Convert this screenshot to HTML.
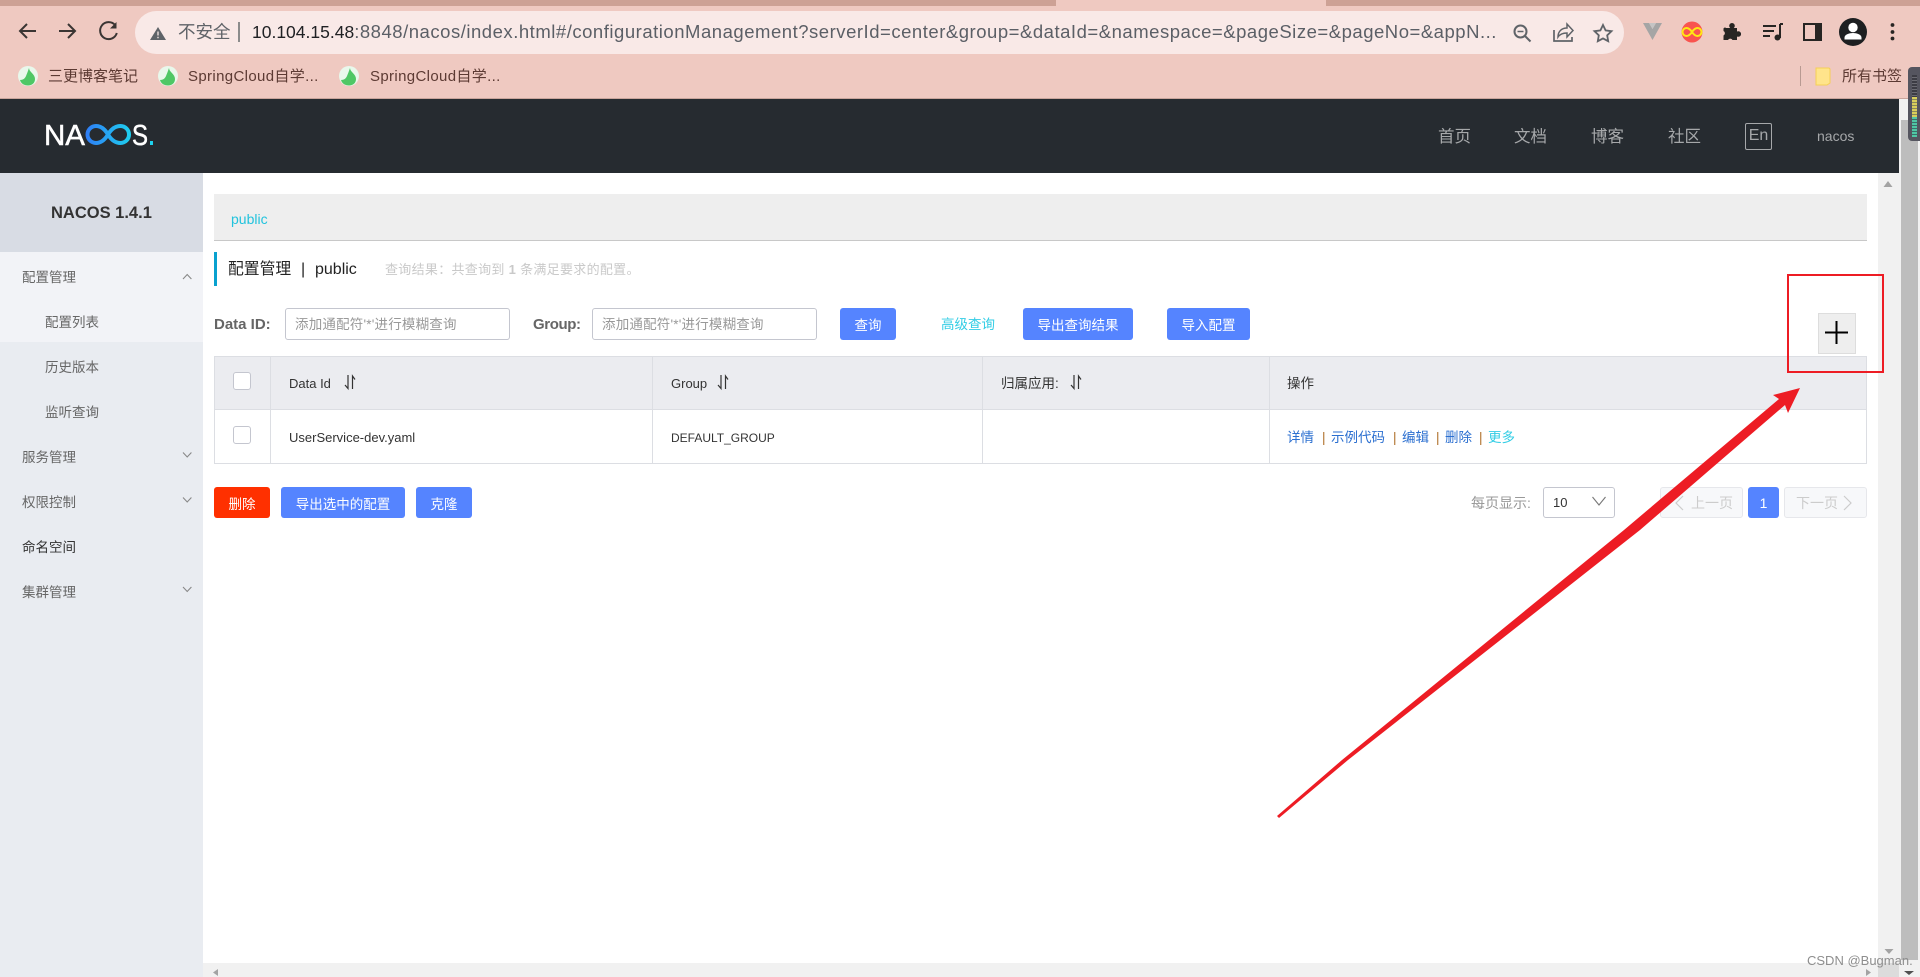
<!DOCTYPE html>
<html lang="zh-CN">
<head>
<meta charset="utf-8">
<title>Nacos</title>
<style>
html,body{margin:0;padding:0;width:1920px;height:977px;overflow:hidden;background:#fff}
body{position:relative;font-family:"Liberation Sans","Noto Sans CJK SC",sans-serif;font-size:13.5px;color:#333}
.b{position:absolute;box-sizing:border-box}
.t{position:absolute;white-space:nowrap;line-height:20px;height:20px}
.btn{position:absolute;box-sizing:border-box;background:#5584ff;color:#fff;border-radius:3px;display:flex;align-items:center;justify-content:center;font-size:13.5px;white-space:nowrap}
.inp{position:absolute;box-sizing:border-box;top:308px;height:32px;border:1px solid #c4c6cf;border-radius:3px;background:#fff;color:#999;line-height:32px;padding-left:9px;font-size:13.5px;letter-spacing:.2px;white-space:nowrap;overflow:hidden}
.m{color:#666}
.sb{color:#666;left:45px}
.lk{color:#2b6fd0;top:428px}
.sep{color:#b0702c;top:428px}
.bm{color:#5c3a33;font-size:15px;top:67px}
.nav{color:#a6a8aa;font-size:16.5px;top:127px}
svg{position:absolute;overflow:visible}
</style>
</head>
<body>
<!-- browser chrome -->
<div class="b" style="left:0;top:0;width:1920px;height:99px;background:#efc9c1;border-bottom:1px solid #c9a59c"></div>
<div class="b" style="left:0;top:0;width:1920px;height:6px;background:#cda195"></div>
<div class="b" style="left:1056px;top:0;width:270px;height:6px;background:#efc9c1"></div>
<div class="b" style="left:135px;top:11px;width:1489px;height:43px;background:#f9e9e7;border-radius:22px"></div>

<svg style="left:0;top:0" width="180" height="60" fill="none" stroke="#3a3533" stroke-width="2">
<path d="M36 31H20M27 24l-7 7 7 7"/>
<path d="M59 31h16M68 24l7 7-7 7"/>
<path d="M115 25a8.500 8.500 0 1 0 1.800 8"/><path d="M116.500 22v6.500H110" fill="#3a3533" stroke="none"/>
<path d="M158 27l8 13h-16z" fill="#5f6368" stroke="none"/>
<path d="M158 31.500v4M158 36.800v1.500" stroke="#f9e9e7" stroke-width="1.300"/>
</svg>
<div class="t" style="left:178px;top:22px;font-size:17.500px;color:#5f6368">不安全</div>
<div class="b" style="left:238px;top:22px;width:2px;height:20px;background:#8c8c8c"></div>
<div class="t" style="left:252px;top:22px;font-size:17.500px;color:#202124">10.104.15.48<span style="color:#5b5f66;font-size:18.500px;letter-spacing:.52px">:8848/nacos/index.html#/configurationManagement?serverId=center&amp;group=&amp;dataId=&amp;namespace=&amp;pageSize=&amp;pageNo=&amp;appN...</span></div>

<svg style="left:0;top:0" width="1920" height="99" fill="none">
<g stroke="#5f6368" stroke-width="2">
<circle cx="1520.500" cy="31.500" r="6"/><path d="M1525 36l5.500 5.500"/><path d="M1517.500 31.500h6" stroke-width="1.500"/>
<path d="M1554 30v11h18v-4" stroke-width="1.700"/><path d="M1558 37c0-6 4-9 9-9v-4l6 6.500-6 6.500v-4c-4 0-7 1-9 4z" stroke-width="1.500"/>
<path d="M1603 25l2.600 5.400 5.900.8-4.300 4.100 1 5.900-5.200-2.800-5.200 2.800 1-5.900-4.300-4.100 5.900-.8z" stroke-width="1.800"/>
</g>
<path d="M1643 23h6l3.500 6 3.500-6h6l-9.500 17z" fill="#a5a5a5"/><path d="M1649 23l3.500 6 3.500-6" fill="#c4c4c4"/>
<circle cx="1692" cy="32" r="10.500" fill="#f9544f"/>
<path d="M1692 32c-2-3-3.800-4-5.500-4-2.200 0-4 1.800-4 4s1.800 4 4 4c1.700 0 3.500-1 5.500-4 2-3 3.800-4 5.500-4 2.200 0 4 1.800 4 4s-1.800 4-4 4c-1.700 0-3.500-1-5.500-4z" stroke="#ffe812" stroke-width="2"/>
<path d="M1726 28h4.200a2.800 2.800 0 1 1 3.600 0H1737v3.500a2.800 2.800 0 1 1 0 5V40h-4.500a2.500 2.500 0 0 0-4.500 0h-4.500v-4.500a2.500 2.500 0 0 0 0-4.500v-1.500a1.500 1.500 0 0 1 2.500-1.500z" fill="#272523"/>
<path d="M1763 26h13M1763 31h11M1763 36h7" stroke="#272523" stroke-width="2"/>
<path d="M1780 24v14" stroke="#272523" stroke-width="2"/><circle cx="1777.500" cy="37.500" r="3" fill="#272523"/><path d="M1780 24h3" stroke="#272523" stroke-width="2"/>
<rect x="1804" y="24" width="17" height="16" stroke="#272523" stroke-width="2"/><rect x="1815" y="24" width="6" height="16" fill="#272523"/>
<circle cx="1853" cy="32" r="14" fill="#1d1f21"/>
<circle cx="1853" cy="27.500" r="4.700" fill="#fff"/><path d="M1844.500 39.500v-2c0-3 5-4.500 8.500-4.500s8.500 1.500 8.500 4.500v2z" fill="#fff"/>
<g fill="#272523"><circle cx="1892.500" cy="25" r="1.900"/><circle cx="1892.500" cy="32" r="1.900"/><circle cx="1892.500" cy="38.500" r="1.900"/></g>
<!-- bookmark favicons -->
<circle cx="28" cy="76" r="10" fill="#e9f8ec"/><path d="M29 68c0 4 6 6 6 11 0 4-3 6.500-7 6.500s-7-2-8-5.500c3 0 5-1.500 6-4 1-2.500 2-5 3-8z" fill="#4fc765"/>
<circle cx="168" cy="76" r="10" fill="#e9f8ec"/><path d="M169 68c0 4 6 6 6 11 0 4-3 6.500-7 6.500s-7-2-8-5.500c3 0 5-1.500 6-4 1-2.500 2-5 3-8z" fill="#4fc765"/>
<circle cx="349" cy="76" r="10" fill="#e9f8ec"/><path d="M350 68c0 4 6 6 6 11 0 4-3 6.500-7 6.500s-7-2-8-5.500c3 0 5-1.500 6-4 1-2.500 2-5 3-8z" fill="#4fc765"/>
<path d="M1800.500 66v20" stroke="#b89a92"/>
<path d="M1816 68h13l1 1v14l-3 2h-11z" fill="#ffe48b" stroke="#f5cf56"/>
</svg>
<div class="t bm" style="left:48px">三更博客笔记</div>
<div class="t bm" style="left:188px;letter-spacing:.35px">SpringCloud自学...</div>
<div class="t bm" style="left:370px;letter-spacing:.35px">SpringCloud自学...</div>
<div class="t bm" style="left:1842px">所有书签</div>

<!-- nacos header -->
<div class="b" style="left:0;top:99px;width:1900px;height:74px;background:#262b30"></div>
<svg style="left:0;top:99px" width="200" height="74">
<defs><linearGradient id="g" x1="85" x2="132" y1="0" y2="0" gradientUnits="userSpaceOnUse"><stop offset="0" stop-color="#2f7cf6"/><stop offset="1" stop-color="#1ed2ee"/></linearGradient></defs>
<text x="44" y="46" font-family="Liberation Sans" font-size="29" fill="#fff" stroke="#fff" stroke-width=".5" textLength="41" lengthAdjust="spacingAndGlyphs">NA</text>
<path d="M108 35.500c-3-5-7-8.500-12-8.500a8.500 8.500 0 0 0 0 17c5 0 9-3.500 12-8.500 3-5 7-8.500 12.500-8.500a8.500 8.500 0 0 1 0 17c-5.500 0-9.500-3.500-12.500-8.500z" fill="none" stroke="url(#g)" stroke-width="4"/>
<text x="132" y="46" font-family="Liberation Sans" font-size="29" fill="#fff" stroke="#fff" stroke-width=".5" textLength="16" lengthAdjust="spacingAndGlyphs">S</text>
<rect x="150" y="42" width="3" height="4" fill="#1ed2ee"/>
</svg>
<div class="t nav" style="left:1438px">首页</div>
<div class="t nav" style="left:1514px">文档</div>
<div class="t nav" style="left:1591px">博客</div>
<div class="t nav" style="left:1668px">社区</div>
<div class="b" style="left:1745px;top:123px;width:27px;height:27px;border:1px solid #a6a8aa;border-radius:2px;color:#a6a8aa;font-size:16px;line-height:24px;text-align:center">En</div>
<div class="t" style="left:1817px;top:126px;font-size:14px;color:#a6a8aa">nacos</div>

<!-- sidebar -->
<div class="b" style="left:0;top:173px;width:203px;height:804px;background:#e9ecf1"></div>
<div class="b" style="left:0;top:173px;width:203px;height:79px;background:#d8dce4"></div>
<div class="b" style="left:0;top:252px;width:203px;height:90px;background:#f2f3f7"></div>
<div class="t" style="left:51px;top:203px;font-size:16.500px;font-weight:bold;color:#333">NACOS 1.4.1</div>
<div class="t m" style="left:22px;top:268px">配置管理</div>
<div class="t sb" style="top:313px">配置列表</div>
<div class="t sb" style="top:358px">历史版本</div>
<div class="t sb" style="top:403px">监听查询</div>
<div class="t m" style="left:22px;top:448px">服务管理</div>
<div class="t m" style="left:22px;top:493px">权限控制</div>
<div class="t" style="left:22px;top:538px;color:#333">命名空间</div>
<div class="t m" style="left:22px;top:583px">集群管理</div>
<svg style="left:0;top:0" width="203" height="600" fill="none" stroke="#888" stroke-width="1.100">
<path d="M183 279l4.200-4.500 4.200 4.500"/>
<path d="M183 452.500l4.200 4.500 4.200-4.500"/>
<path d="M183 497.500l4.200 4.500 4.200-4.500"/>
<path d="M183 587l4.200 4.500 4.200-4.500"/>
</svg>

<!-- content -->
<div class="b" style="left:214px;top:194px;width:1653px;height:47px;background:#eeeeee;border-bottom:1px solid #c8c8c8"></div>
<div class="t" style="left:231px;top:209px;font-size:14px;color:#22c3dd">public</div>
<div class="b" style="left:214px;top:252px;width:3px;height:34px;background:#09a1cf"></div>
<div class="t" style="left:228px;top:260px;font-size:15.800px;color:#222">配置管理</div>
<div class="t" style="left:301px;top:260px;font-size:16px;color:#222">|</div>
<div class="t" style="left:315px;top:260px;font-size:16px;color:#222">public</div>
<div class="t" style="left:385px;top:260px;font-size:13px;color:#c9c9c9;letter-spacing:.3px">查询结果：共查询到 <b>1</b> 条满足要求的配置。</div>

<div class="t" style="left:214px;top:315px;font-size:15px;font-weight:bold;color:#666">Data ID:</div>
<div class="inp" style="left:285px;width:225px">添加通配符'*'进行模糊查询</div>
<div class="t" style="left:533px;top:315px;font-size:15px;font-weight:bold;color:#666;letter-spacing:-.4px">Group:</div>
<div class="inp" style="left:592px;width:225px">添加通配符'*'进行模糊查询</div>
<div class="btn" style="left:840px;top:308px;width:56px;height:32px">查询</div>
<div class="t" style="left:941px;top:315px;color:#33cde5">高级查询</div>
<div class="btn" style="left:1023px;top:308px;width:110px;height:32px">导出查询结果</div>
<div class="btn" style="left:1167px;top:308px;width:83px;height:32px">导入配置</div>

<!-- plus -->
<div class="b" style="left:1818px;top:313px;width:38px;height:41px;background:#eee;border:1px solid #ddd"></div>
<svg style="left:1818px;top:313px" width="38" height="41"><path d="M7 19.500h23M18.500 8v23" stroke="#000" stroke-width="2"/></svg>

<!-- table -->
<div class="b" style="left:214px;top:356px;width:1653px;height:108px;border:1px solid #dcdee3;background:#fff"></div>
<div class="b" style="left:215px;top:357px;width:1651px;height:53px;background:#ebecf0;border-bottom:1px solid #dcdee3"></div>
<div class="b" style="left:270px;top:357px;width:1px;height:106px;background:#dcdee3"></div>
<div class="b" style="left:652px;top:357px;width:1px;height:106px;background:#dcdee3"></div>
<div class="b" style="left:982px;top:357px;width:1px;height:106px;background:#dcdee3"></div>
<div class="b" style="left:1269px;top:357px;width:1px;height:106px;background:#dcdee3"></div>
<div class="b" style="left:233px;top:372px;width:18px;height:18px;background:#fff;border:1px solid #c4c6cf;border-radius:3px"></div>
<div class="b" style="left:233px;top:426px;width:18px;height:18px;background:#fff;border:1px solid #c4c6cf;border-radius:3px"></div>
<div class="t" style="left:289px;top:374px;font-size:13px;color:#333">Data Id</div>
<svg style="left:344px;top:375px" width="13" height="15" fill="none" stroke="#333" stroke-width="1.200"><path d="M4 0v13.500L1 10M8.500 14V1l2.500 3.500"/></svg>
<div class="t" style="left:671px;top:374px;font-size:13px;color:#333">Group</div>
<svg style="left:717px;top:375px" width="13" height="15" fill="none" stroke="#333" stroke-width="1.200"><path d="M4 0v13.500L1 10M8.500 14V1l2.500 3.500"/></svg>
<div class="t" style="left:1001px;top:374px;color:#333">归属应用:</div>
<svg style="left:1070px;top:375px" width="13" height="15" fill="none" stroke="#333" stroke-width="1.200"><path d="M4 0v13.500L1 10M8.500 14V1l2.500 3.500"/></svg>
<div class="t" style="left:1287px;top:374px;color:#333">操作</div>
<div class="t" style="left:289px;top:428px;font-size:13px;color:#333">UserService-dev.yaml</div>
<div class="t" style="left:671px;top:428px;font-size:12px;color:#333">DEFAULT_GROUP</div>
<div class="t lk" style="left:1287px">详情</div>
<div class="t sep" style="left:1322px">|</div>
<div class="t lk" style="left:1331px">示例代码</div>
<div class="t sep" style="left:1393px">|</div>
<div class="t lk" style="left:1402px">编辑</div>
<div class="t sep" style="left:1436px">|</div>
<div class="t lk" style="left:1445px">删除</div>
<div class="t sep" style="left:1479px">|</div>
<div class="t" style="left:1488px;top:428px;color:#33cde5">更多</div>

<!-- bottom actions -->
<div class="btn" style="left:214px;top:487px;width:56px;height:31px;background:#ff3000">删除</div>
<div class="btn" style="left:281px;top:487px;width:124px;height:31px">导出选中的配置</div>
<div class="btn" style="left:416px;top:487px;width:56px;height:31px">克隆</div>

<!-- pagination -->
<div class="t" style="left:1471px;top:493px;font-size:14px;color:#999">每页显示:</div>
<div class="b" style="left:1543px;top:487px;width:72px;height:31px;border:1px solid #c4c6cf;border-radius:3px;background:#fff"></div>
<div class="t" style="left:1553px;top:493px;font-size:13px;color:#333">10</div>
<svg style="left:1592px;top:496px" width="15" height="12" fill="none" stroke="#777" stroke-width="1.100"><path d="M.5 1L7 9l6.500-8"/></svg>
<div class="b" style="left:1660px;top:487px;width:83px;height:31px;background:#f7f8fa;border:1px solid #e6e7eb;border-radius:3px"></div>
<svg style="left:1675px;top:495px" width="10" height="16" fill="none" stroke="#ccc" stroke-width="1.200"><path d="M8 1L1 8l7 7"/></svg>
<div class="t" style="left:1691px;top:493px;font-size:14px;color:#ccc">上一页</div>
<div class="btn" style="left:1748px;top:487px;width:31px;height:31px;font-size:14px">1</div>
<div class="b" style="left:1784px;top:487px;width:83px;height:31px;background:#f7f8fa;border:1px solid #e6e7eb;border-radius:3px"></div>
<div class="t" style="left:1796px;top:493px;font-size:14px;color:#ccc">下一页</div>
<svg style="left:1843px;top:495px" width="10" height="16" fill="none" stroke="#ccc" stroke-width="1.200"><path d="M1 1l7 7-7 7"/></svg>

<!-- scrollbars -->
<div class="b" style="left:1878px;top:173px;width:22px;height:790px;background:#f1f1f1"></div>
<div class="b" style="left:203px;top:963px;width:1675px;height:14px;background:#f1f1f1"></div>
<div class="b" style="left:1878px;top:963px;width:22px;height:14px;background:#dcdcdc"></div>
<div class="b" style="left:1899px;top:99px;width:21px;height:878px;background:#f1f1f1"></div>
<div class="b" style="left:1901px;top:120px;width:17px;height:840px;background:#bdbdbd"></div>
<svg style="left:0;top:0" width="1920" height="977">
<path d="M1888 181l4.500 6h-9z" fill="#a3a3a3"/>
<path d="M1889 954l-4.500-5h9z" fill="#a3a3a3"/>
<path d="M1866 969v7l5-3.500z" fill="#a3a3a3"/>
<path d="M218 969v7l-5-3.500z" fill="#a3a3a3"/>
<path d="M1909 975l-5-4h10z" fill="#505050"/>
</svg>
<div class="b" style="left:1908px;top:67px;width:12px;height:74px;background:#55555f;border-radius:4px 0 0 4px"></div>
<div class="b" style="left:1912px;top:75px;width:5px;height:22px;background:repeating-linear-gradient(#3c3c44 0 2px,#6b6b72 2px 3px)"></div>
<div class="b" style="left:1912px;top:97px;width:5px;height:20px;background:repeating-linear-gradient(#d9cf5b 0 2px,#8a8a5a 2px 3px)"></div>
<div class="b" style="left:1912px;top:117px;width:5px;height:20px;background:repeating-linear-gradient(#4fc7a4 0 2px,#3c6f6a 2px 3px)"></div>

<!-- annotations -->
<div class="b" style="left:1787px;top:274px;width:97px;height:99px;border:2px solid #ed1c24"></div>
<svg style="left:0;top:0" width="1920" height="977"><path d="M1800 388L1788 413 1785 405 1640 530 1348 760 1279 818 1277 816 1342 760 1624 530 1779 399 1773 395z" fill="#ed1c24"/></svg>
<div class="t" style="left:1807px;top:951px;font-size:13px;color:#8e8e8e">CSDN @Bugman.</div>
</body>
</html>
